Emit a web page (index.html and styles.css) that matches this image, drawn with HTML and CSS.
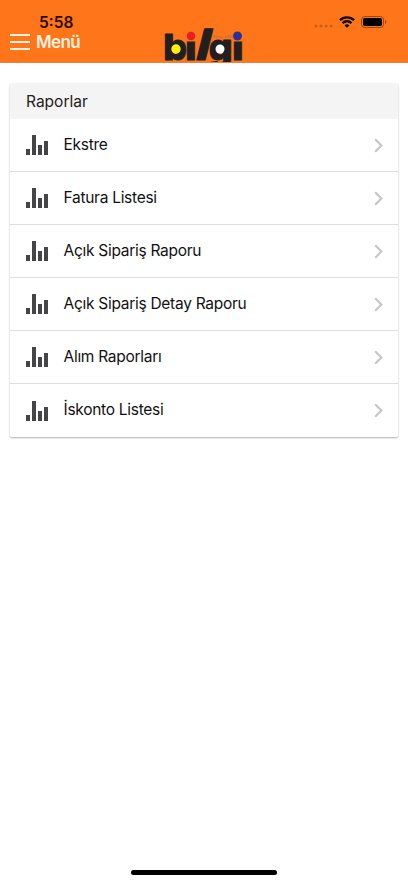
FILE: index.html
```html
<!DOCTYPE html>
<html lang="tr">
<head>
  <meta charset="UTF-8" />
  <meta name="viewport" content="width=device-width, initial-scale=1.0">
  <title>Raporlar</title>
  <link rel="stylesheet" href="styles.css">
</head>
<body>

<!-- Icons -->
<svg class="defs" width="0" height="0">
  <symbol id="bars" viewBox="0 0 22 20">
    <path d="M0 14h4v6H0zM6 0h4v20H6zM12 10h4v10h-4zM18 6h4v14h-4z" fill="#454547" />
  </symbol>
  <symbol id="chevron" viewBox="0 0 9 15">
    <path d="M1.2 1.2 7.4 7.5 1.2 13.8" fill="none" stroke="#c4c4c6" stroke-width="2" />
  </symbol>
</svg>

<!-- Header -->
<header class="header">
  <div class="status">
    <span class="time">5:58</span>
    <div class="status-icons">
      <svg width="19" height="4" viewBox="0 0 19 4" fill="#c95c18">
        <circle cx="2" cy="2" r="1.5" /><circle cx="7" cy="2" r="1.5" /><circle cx="12" cy="2" r="1.5" /><circle cx="17" cy="2" r="1.5" />
      </svg>
      <svg class="wifi" width="16" height="12" viewBox="0 0 16 12" fill="none" stroke="#100400" stroke-width="2.3">
        <path d="M.9 4.2a10.2 10.2 0 0 1 14.2 0M3.5 7.1a6.4 6.4 0 0 1 9 0" />
        <path d="M8 11.8 5.5 9.4a3.6 3.6 0 0 1 5 0z" fill="#100400" stroke="none" />
      </svg>
      <svg class="battery" width="26" height="12" viewBox="0 0 26 12">
        <rect x=".5" y=".5" width="22" height="11" rx="3.2" fill="none" stroke="#9c4310" />
        <rect x="2" y="2" width="19" height="8" rx="1.8" fill="#000" />
        <path d="M24 4v4q1.5-.6 1.5-2T24 4z" fill="#9c4310" />
      </svg>
    </div>
  </div>
  <div class="navbar">
    <div class="menu-btn">
      <span class="burger"><i></i><i></i><i></i></span>
      <span class="menu-text">Menü</span>
    </div>
    <svg class="logo" width="84" height="36" viewBox="0 0 84 36">
      <!-- the dots of both i letters are replaced by the coloured circles -->
      <clipPath id="stem"><rect x="0" y="15.5" width="84" height="21" /></clipPath>
      <g class="logo-text">
        <text x="-0.5" y="33.5">b</text>
        <g clip-path="url(#stem)"><text x="21.5" y="33.5">i</text></g>
        <text class="slash" transform="translate(30.5 33.5) skewX(-14)" x="0" y="0">l</text>
        <text x="45" y="33.5">g</text>
        <g clip-path="url(#stem)"><text x="68.5" y="33.5">i</text></g>
      </g>
      <text class="since" x="48" y="11.5">Since 1982</text>
      <circle cx="12" cy="23" r="4.7" fill="#fff200" />
      <circle cx="27" cy="10" r="4.3" fill="#ed1c24" />
      <circle cx="56" cy="23" r="4.5" fill="#fff" />
      <circle cx="73.5" cy="10" r="4.5" fill="#2e3192" />
    </svg>
  </div>
</header>

<!-- Report List -->
<main class="card">
  <h2 class="card-title">Raporlar</h2>
  <ul class="list">
    <li class="item"><svg class="bars"><use href="#bars" /></svg><span>Ekstre</span><svg class="chevron"><use href="#chevron" /></svg></li>
    <li class="item"><svg class="bars"><use href="#bars" /></svg><span>Fatura Listesi</span><svg class="chevron"><use href="#chevron" /></svg></li>
    <li class="item"><svg class="bars"><use href="#bars" /></svg><span>Açık Sipariş Raporu</span><svg class="chevron"><use href="#chevron" /></svg></li>
    <li class="item"><svg class="bars"><use href="#bars" /></svg><span>Açık Sipariş Detay Raporu</span><svg class="chevron"><use href="#chevron" /></svg></li>
    <li class="item"><svg class="bars"><use href="#bars" /></svg><span>Alım Raporları</span><svg class="chevron"><use href="#chevron" /></svg></li>
    <li class="item"><svg class="bars"><use href="#bars" /></svg><span>İskonto Listesi</span><svg class="chevron"><use href="#chevron" /></svg></li>
  </ul>
</main>

<div class="home-bar"></div>

</body>
</html>
```
FILE: styles.css
```css
* { margin: 0; padding: 0; box-sizing: border-box; }
body {
  font-family: Inter, "Liberation Sans", sans-serif;
  background: #fff;
  color: #111;
  height: 883px;
  display: flex; flex-direction: column;
  overflow: hidden;
}
svg { display: block; flex: none; }
.defs { position: absolute; }
.header {
  height: 63px;
  background: #ff751a;
  border-bottom: 1px solid #e9813f;
  overflow: hidden;
}
.status {
  height: 27px;
  padding: 13px 21px 0 39px;
  display: flex; justify-content: space-between;
}
.time {
  font-size: 15.5px; line-height: 20px;
  font-weight: 600; color: #240b00;
}
.status-icons { display: flex; align-items: flex-start; padding-top: 3px; }
.status-icons svg:first-child { margin-top: 8px; }
.wifi { margin-left: 6px; }
.battery { margin-left: 6px; }
.navbar {
  display: grid;
  grid-template-columns: 153.5px 84px;
  padding-left: 10px;
}
.menu-btn { display: flex; align-items: center; height: 30px; gap: 6px; }
.burger { width: 20px; display: flex; flex-direction: column; gap: 5px; }
.burger i { height: 2px; background: #fff0df; }
.menu-text {
  font-size: 17px; font-weight: 600;
  color: #fff0df; letter-spacing: -0.6px;
}
.logo { margin-top: -1px; }
.logo-text {
  font-size: 36px; font-weight: 900;
  fill: #231f20; stroke: #231f20; stroke-linejoin: round;
}
.slash { font-size: 43px; }
.since { font-family: "Liberation Serif", serif; font-size: 5px; font-style: italic; fill: #a0704f; }
.card {
  margin: 20px 10px 0;
  background: #fff;
  border-radius: 2px;
  box-shadow: 0 1px 2px rgba(0,0,0,0.32);
}
.card-title {
  height: 36px; padding-left: 16px;
  background: #f4f4f4;
  border-radius: 2px 2px 0 0;
  font-size: 15.5px; line-height: 37px;
  font-weight: 400; color: #222;
}
.list { list-style: none; }
.item {
  height: 53px;
  padding: 0 15px 0 16px;
  display: flex; align-items: center;
  border-bottom: 1px solid #dedede;
  font-size: 15.5px; letter-spacing: -0.28px;
}
.item:last-child { border-bottom: none; }
.item span { flex: 1; padding-bottom: 2px; }
.bars { width: 22px; height: 20px; margin: 0 15.5px 0 0; }
.chevron { width: 9px; height: 15px; }
.home-bar {
  width: 146px; height: 5px;
  margin: auto auto 8px;
  background: #000;
  border-radius: 3px;
}
```
